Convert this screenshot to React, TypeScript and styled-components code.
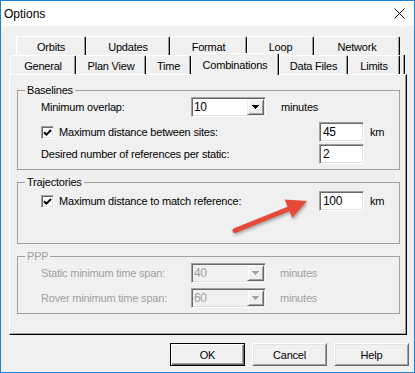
import React from "react";
import styled, { createGlobalStyle } from "styled-components";

const GlobalStyle = createGlobalStyle`
  html, body { margin: 0; padding: 0; background: #ffffff; }
  body { font-family: "Liberation Sans", Arial, sans-serif; }
`;

const Page = styled.div`
  position: relative;
  width: 415px;
  height: 373px;
  overflow: hidden;
`;

const Window = styled.div`
  box-sizing: border-box;
  width: 415px;
  height: 373px;
  border: 1px solid #1883d7;
  display: flex;
  flex-direction: column;
  background: #f0f0f0;
  font-family: "Liberation Sans", Arial, sans-serif;
  font-size: 11px;
  letter-spacing: -0.2px;
  color: #000;
`;

const TitleBar = styled.div`
  flex: none;
  height: 25px;
  background: #ffffff;
  display: flex;
  align-items: center;
  justify-content: space-between;
  padding: 0 9px 0 3px;
`;

const Title = styled.span`
  font-size: 12px;
  letter-spacing: 0;
`;

const CloseIcon = styled.svg`
  display: block;
  width: 11px;
  height: 11px;
`;

const Body = styled.div`
  flex: 1;
  display: flex;
  flex-direction: column;
  padding-top: 10px;
`;

const TabStrip = styled.div`
  display: flex;
  flex-direction: column;
`;

const TabRow = styled.div<{ $indent: number }>`
  display: flex;
  align-items: flex-end;
  height: 19px;
  margin-left: ${(p) => p.$indent}px;
`;

const Tab = styled.div<{ $w: number; $active?: boolean }>`
  position: relative;
  z-index: ${(p) => (p.$active ? 2 : 1)};
  flex: none;
  box-sizing: border-box;
  width: ${(p) => p.$w}px;
  height: ${(p) => (p.$active ? 22 : 19)}px;
  margin-bottom: ${(p) => (p.$active ? -1 : 0)}px;
  background: #f0f0f0;
  border-top: 1px solid #ffffff;
  border-left: 1px solid #ffffff;
  border-right: 1px solid #000000;
  box-shadow: inset -1px 0 0 #a0a0a0;
  border-radius: 2px 2px 0 0;
  display: flex;
  align-items: center;
  justify-content: center;
  padding-top: ${(p) => (p.$active ? 0 : 1)}px;
  white-space: nowrap;
`;

const TabStub = styled.div`
  flex: none;
  box-sizing: border-box;
  width: 5px;
  height: 19px;
  border-right: 1px solid #000000;
  box-shadow: inset -1px 0 0 #a0a0a0;
`;

const Panel = styled.div`
  box-sizing: border-box;
  height: 261px;
  margin: 0 7px 0 8px;
  border-top: 1px solid #ffffff;
  border-left: 1px solid #ffffff;
  border-right: 1px solid #000000;
  border-bottom: 1px solid #000000;
  box-shadow: inset -1px -1px 0 #a0a0a0;
  padding: 9px 0 0 7px;
  display: flex;
  flex-direction: column;
`;

const Group = styled.fieldset<{ $mt: number }>`
  box-sizing: border-box;
  width: 383px;
  margin: ${(p) => p.$mt}px 0 0 0;
  padding: 0;
  min-inline-size: 0;
  border: 1px solid #a0a0a0;
`;

const Legend = styled.legend<{ $disabled?: boolean }>`
  margin-left: 7px;
  padding: 0 2px;
  line-height: 13px;
  font-size: 11px;
  color: ${(p) => (p.$disabled ? "#a0a0a0" : "#000000")};
`;

const GroupBody = styled.div<{ $pt: number; $pb: number }>`
  display: flex;
  flex-direction: column;
  padding: ${(p) => p.$pt}px 0 ${(p) => p.$pb}px 23px;
`;

const Row = styled.div<{ $mt?: number }>`
  display: flex;
  align-items: center;
  height: 20px;
  margin-top: ${(p) => p.$mt ?? 0}px;
`;

const Label = styled.span<{ $w?: number; $disabled?: boolean }>`
  flex: none;
  width: ${(p) => (p.$w ? `${p.$w}px` : "auto")};
  white-space: nowrap;
  color: ${(p) => (p.$disabled ? "#a0a0a0" : "#000000")};
  margin-top: -1px;
`;

const CheckArea = styled.div<{ $w: number }>`
  flex: none;
  width: ${(p) => p.$w}px;
  display: flex;
  align-items: center;
`;

const CheckBox = styled.div`
  flex: none;
  box-sizing: border-box;
  width: 13px;
  height: 13px;
  background: #ffffff;
  border: 1px solid;
  border-color: #a0a0a0 #ffffff #ffffff #a0a0a0;
  box-shadow: inset 1px 1px 0 #696969, inset -1px -1px 0 #e3e3e3;
  display: flex;
  align-items: center;
  justify-content: center;
  margin-right: 5px;
`;

const Sunken = styled.div<{ $w: number; $disabled?: boolean }>`
  flex: none;
  box-sizing: border-box;
  width: ${(p) => p.$w}px;
  height: 20px;
  background: ${(p) => (p.$disabled ? "#f0f0f0" : "#ffffff")};
  border: 1px solid;
  border-color: #a0a0a0 #ffffff #ffffff #a0a0a0;
  box-shadow: inset 1px 1px 0 #696969, inset -1px -1px 0 #e3e3e3;
  padding: 1px;
  display: flex;
  align-items: stretch;
`;

const FieldText = styled.span<{ $pl: number; $disabled?: boolean }>`
  flex: 1;
  display: flex;
  align-items: center;
  padding-left: ${(p) => p.$pl}px;
  color: ${(p) => (p.$disabled ? "#a0a0a0" : "#000000")};
  font-size: 12px;
  letter-spacing: -0.3px;
`;

const DropButton = styled.div`
  flex: none;
  box-sizing: border-box;
  width: 17px;
  background: #f0f0f0;
  border: 1px solid;
  border-color: #f0f0f0 #696969 #696969 #f0f0f0;
  box-shadow: inset 1px 1px 0 #ffffff, inset -1px -1px 0 #a0a0a0;
  display: flex;
  align-items: center;
  justify-content: center;
`;

const Unit = styled.span<{ $ml: number; $disabled?: boolean }>`
  margin-left: ${(p) => p.$ml}px;
  white-space: nowrap;
  color: ${(p) => (p.$disabled ? "#a0a0a0" : "#000000")};
  margin-top: -1px;
`;

const ButtonRow = styled.div`
  display: flex;
  justify-content: flex-end;
  gap: 7px;
  margin-top: 8px;
  padding-right: 5px;
`;

const DlgButton = styled.button<{ $default?: boolean }>`
  box-sizing: border-box;
  width: 75px;
  height: 23px;
  padding: 0;
  margin: 0;
  font-family: "Liberation Sans", Arial, sans-serif;
  font-size: 11px;
  letter-spacing: -0.2px;
  color: #000000;
  background: #f0f0f0;
  border: 1px solid;
  border-color: ${(p) =>
    p.$default ? "#000000" : "#ffffff #696969 #696969 #ffffff"};
  box-shadow: ${(p) =>
    p.$default
      ? "inset 1px 1px 0 #ffffff, inset -1px -1px 0 #696969, inset -2px -2px 0 #a0a0a0"
      : "inset 1px 1px 0 #e3e3e3, inset -1px -1px 0 #a0a0a0"};
`;

const ArrowLayer = styled.svg`
  position: absolute;
  left: 0;
  top: 0;
  width: 415px;
  height: 373px;
  pointer-events: none;
  filter: drop-shadow(1px 2px 1.5px rgba(0, 0, 0, 0.3));
`;

const Triangle = ({ color }: { color: string }) => (
  <svg width="7" height="4" viewBox="0 0 7 4" shapeRendering="crispEdges">
    <path d="M0 0H7V1H6V2H5V3H4V4H3V3H2V2H1V1H0Z" fill={color} />
  </svg>
);

const Check = () => (
  <svg width="9" height="9" viewBox="0 0 9 9">
    <path d="M1 4.2 L3.4 6.6 L8 2" fill="none" stroke="#000" strokeWidth="2" />
  </svg>
);

const Combo = ({ value, disabled }: { value: string; disabled?: boolean }) => (
  <Sunken $w={75} $disabled={disabled}>
    <FieldText $pl={1} $disabled={disabled}>
      {value}
    </FieldText>
    <DropButton>
      <Triangle color={disabled ? "#a0a0a0" : "#000000"} />
    </DropButton>
  </Sunken>
);

const TextBox = ({ value }: { value: string }) => (
  <Sunken $w={45}>
    <FieldText $pl={2}>{value}</FieldText>
  </Sunken>
);

const backTabs: [string, number][] = [
  ["Orbits", 70],
  ["Updates", 84],
  ["Format", 77],
  ["Loop", 67],
  ["Network", 86],
];

const frontTabs: [string, number][] = [
  ["General", 66],
  ["Plan View", 70],
  ["Time", 45],
  ["Combinations", 88],
  ["Data Files", 69],
  ["Limits", 52],
];

export default function App() {
  return (
    <Page>
      <GlobalStyle />
      <Window>
        <TitleBar>
          <Title>Options</Title>
          <CloseIcon viewBox="0 0 11 11">
            <path d="M0.5 0.5L10.5 10.5M10.5 0.5L0.5 10.5" stroke="#000" strokeWidth="1" />
          </CloseIcon>
        </TitleBar>
        <Body>
          <TabStrip>
            <TabRow $indent={15}>
              {backTabs.map(([t, w]) => (
                <Tab key={t} $w={w}>
                  {t}
                </Tab>
              ))}
            </TabRow>
            <TabRow $indent={9}>
              {frontTabs.map(([t, w]) => (
                <Tab key={t} $w={w} $active={t === "Combinations"}>
                  {t}
                </Tab>
              ))}
              <TabStub />
            </TabRow>
          </TabStrip>
          <Panel>
            <Group $mt={0}>
              <Legend>Baselines</Legend>
              <GroupBody $pt={0} $pb={5}>
                <Row>
                  <Label $w={150}>Minimum overlap:</Label>
                  <Combo value="10" />
                  <Unit $ml={15}>minutes</Unit>
                </Row>
                <Row $mt={5}>
                  <CheckArea $w={278}>
                    <CheckBox>
                      <Check />
                    </CheckBox>
                    <Label>Maximum distance between sites:</Label>
                  </CheckArea>
                  <TextBox value="45" />
                  <Unit $ml={6}>km</Unit>
                </Row>
                <Row $mt={2}>
                  <Label $w={278}>Desired number of references per static:</Label>
                  <TextBox value="2" />
                </Row>
              </GroupBody>
            </Group>
            <Group $mt={6}>
              <Legend>Trajectories</Legend>
              <GroupBody $pt={2} $pb={32}>
                <Row>
                  <CheckArea $w={278}>
                    <CheckBox>
                      <Check />
                    </CheckBox>
                    <Label>Maximum distance to match reference:</Label>
                  </CheckArea>
                  <TextBox value="100" />
                  <Unit $ml={6}>km</Unit>
                </Row>
              </GroupBody>
            </Group>
            <Group $mt={6}>
              <Legend $disabled>PPP</Legend>
              <GroupBody $pt={0} $pb={5}>
                <Row>
                  <Label $w={150} $disabled>
                    Static minimum time span:
                  </Label>
                  <Combo value="40" disabled />
                  <Unit $ml={14} $disabled>
                    minutes
                  </Unit>
                </Row>
                <Row $mt={5}>
                  <Label $w={150} $disabled>
                    Rover minimum time span:
                  </Label>
                  <Combo value="60" disabled />
                  <Unit $ml={14} $disabled>
                    minutes
                  </Unit>
                </Row>
              </GroupBody>
            </Group>
          </Panel>
          <ButtonRow>
            <DlgButton $default>OK</DlgButton>
            <DlgButton>Cancel</DlgButton>
            <DlgButton>Help</DlgButton>
          </ButtonRow>
        </Body>
      </Window>
      <ArrowLayer viewBox="0 0 415 373">
        <line
          x1="235"
          y1="230.5"
          x2="291"
          y2="208"
          stroke="#e5493a"
          strokeWidth="5"
          strokeLinecap="round"
        />
        <polygon points="307,201 284.7,199.4 292.3,217.9" fill="#e5493a" />
      </ArrowLayer>
    </Page>
  );
}
